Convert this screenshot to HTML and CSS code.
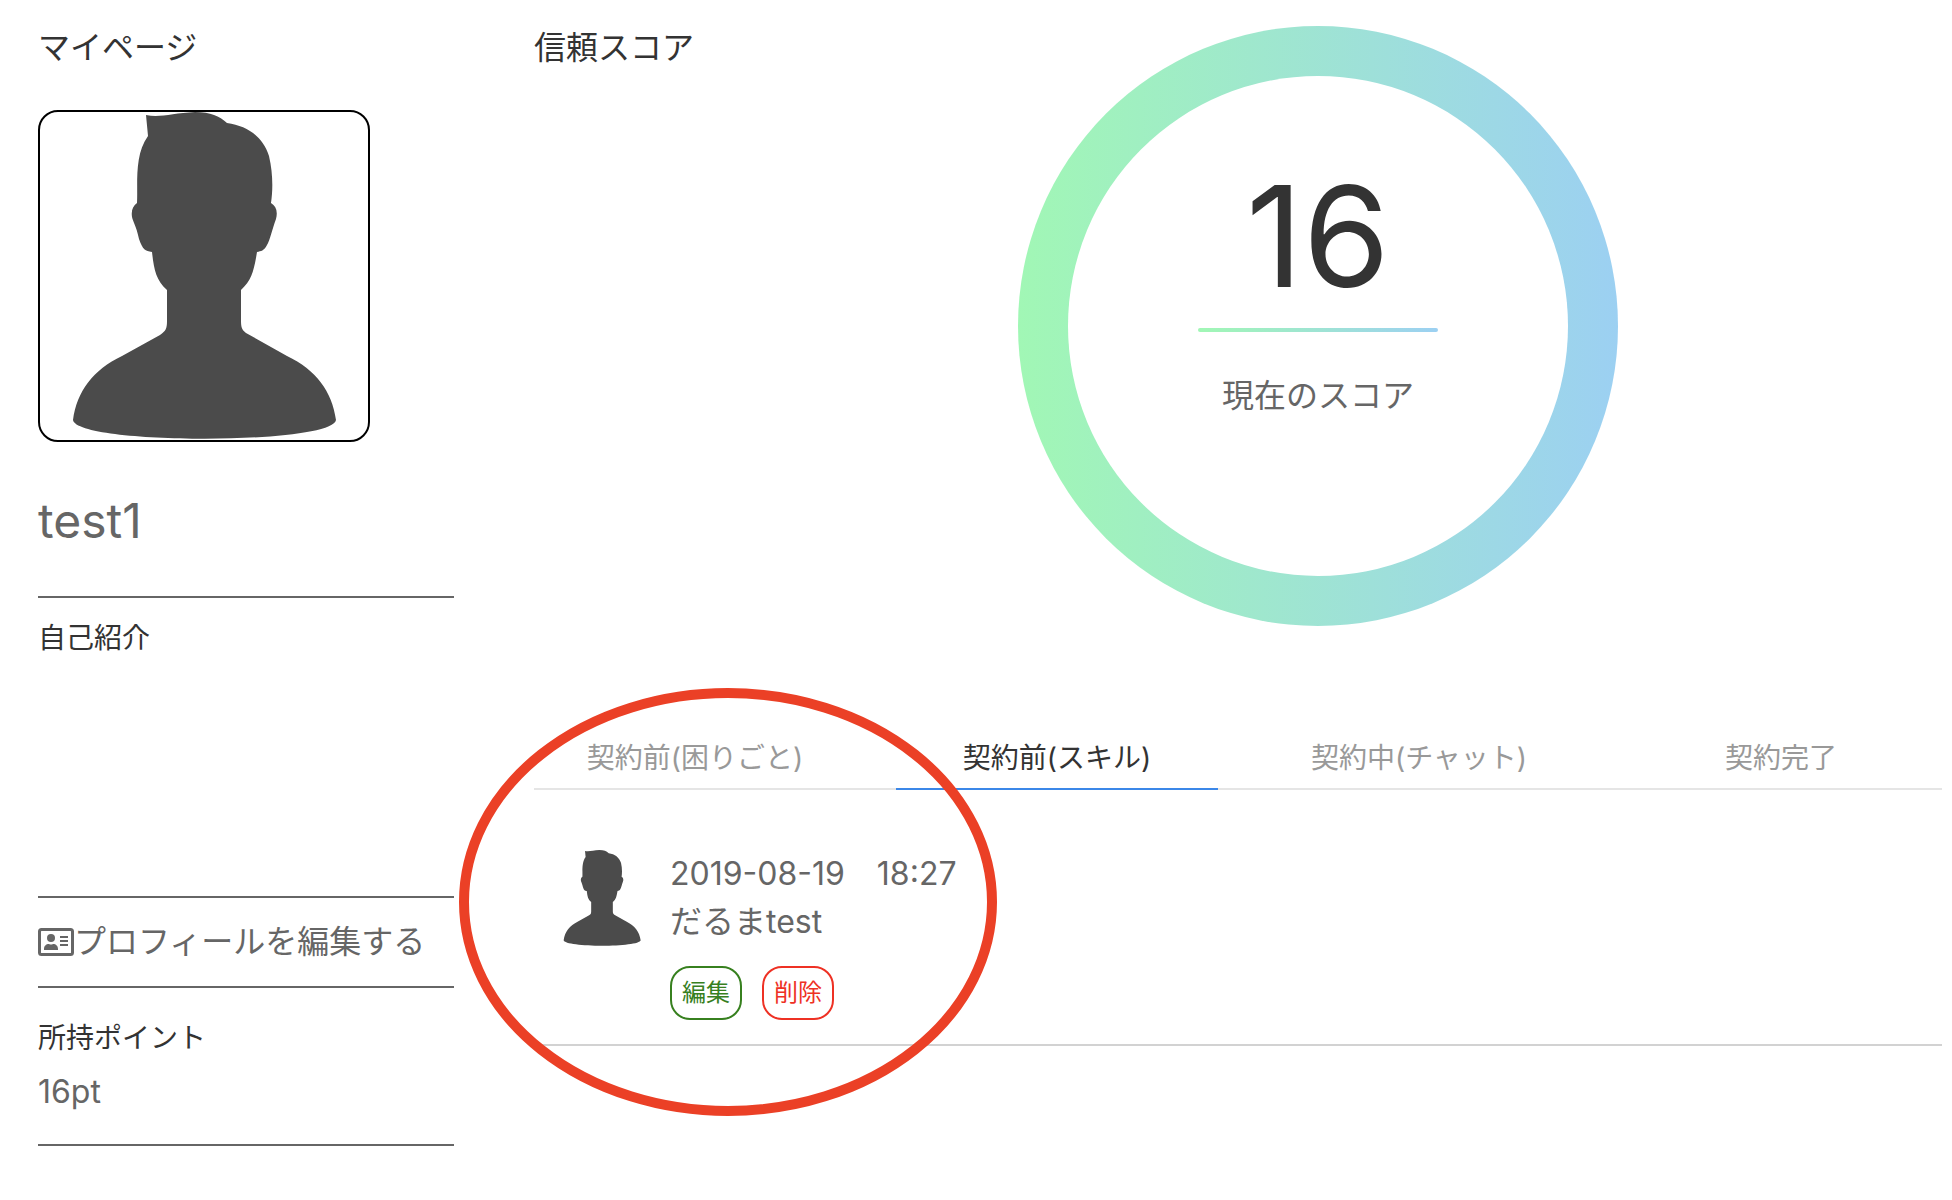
FILE: index.html
```html
<!DOCTYPE html>
<html lang="ja">
<head>
    <meta charset="UTF-8">
    <meta name="viewport" content="width=device-width, initial-scale=1.0">
    <title>マイページ</title>
    <link rel="stylesheet" href="styles.css">
</head>
<body>
    <!-- avatar silhouette, used twice below -->
    <svg class="symbols" aria-hidden="true">
        <symbol id="person" viewBox="0 0 328 328">
            <path d="M106 3 C120 6 133 1 155 0 C171 0 179 4 187 11 C208 14 223 25 229 44 C233 61 233 78 231 91 C236 94 238 99 236 107 C232 118 230 128 227 133 C224 139 221 139 217 140 C214 158 212 168 201 178 L201 209 C201 215 202 218 206 221 L247 244 C276 258 292 279 296 308 C292 333 37 333 33 308 C37 279 53 258 82 244 L120 223 C126 219 127 216 127 209 L127 178 C116 168 114 158 112 140 C105 139 103 138 99 127 C96 113 93 110 92 105 C91 98 93 94 97 91 C98 73 94 43 108 24 Z" fill="#4b4b4b"/>
        </symbol>
    </svg>
    <div class="container">
        <aside class="profile">
            <h1 class="title">マイページ</h1>
            <svg class="profile-img" role="img" aria-label="プロフィール画像"><use href="#person"/></svg>
            <p class="profile-name">test1</p>
            <section class="intro">
                <h2 class="label">自己紹介</h2>
            </section>
            <a href="#" class="edit-link">
                <svg class="card-icon" viewBox="0 0 36 28" aria-hidden="true">
                    <rect x="1.5" y="1.5" width="33" height="25" rx="2" fill="none" stroke="currentColor" stroke-width="3"/>
                    <circle cx="13" cy="10" r="4"/>
                    <path d="M6 22v-1c0-3 2-5 5-5q2 1 4 0c3 0 5 2 5 5v1zM22 8h8v2h-8zM22 12h8v2h-8zM22 16h8v2h-8z"/>
                </svg>
                <span>プロフィールを編集する</span>
            </a>
            <section class="point">
                <h2 class="label">所持ポイント</h2>
                <p class="point-value">16pt</p>
            </section>
        </aside>
        <main class="content">
            <section class="score">
                <h2 class="title">信頼スコア</h2>
                <div class="score-circle">
                    <div class="score-inner">
                        <p class="score-number">16</p>
                        <div class="score-line"></div>
                        <p class="score-text">現在のスコア</p>
                    </div>
                </div>
            </section>
            <nav class="tab">
                <div class="tab-item"><a href="#">契約前(困りごと)</a></div>
                <div class="tab-item active"><a href="#">契約前(スキル)</a></div>
                <div class="tab-item"><a href="#">契約中(チャット)</a></div>
                <div class="tab-item"><a href="#">契約完了</a></div>
            </nav>
            <article class="post">
                <svg class="post-img" role="img" aria-label="投稿者の画像"><use href="#person"/></svg>
                <div class="post-body">
                    <p>2019-08-19　18:27</p>
                    <p>だるまtest</p>
                    <div class="buttons">
                        <button type="button" class="btn edit">編集</button>
                        <button type="button" class="btn delete">削除</button>
                    </div>
                </div>
                <!-- red marker round the post -->
                <svg class="marker" viewBox="0 0 538 428" aria-hidden="true">
                    <ellipse cx="269" cy="214" rx="264" ry="209" fill="none" stroke="#eb4026" stroke-width="10"/>
                </svg>
            </article>
        </main>
    </div>
</body>
</html>
```

FILE: styles.css
```css
* {
    box-sizing: border-box;
}
body {
    font-family: Inter, "Noto Sans CJK JP", sans-serif;
    margin: 0;
    background: #fff;
    color: #666;
    font-size: 32px;
    line-height: 48px;
}
h1, h2, p {
    margin: 0;
    font-weight: normal;
}
a {
    color: inherit;
    text-decoration: none;
}
.symbols {
    display: none;
}
.container {
    display: flex;
    gap: 80px;
    padding: 24px 10px 0 38px;
}
.title {
    font-size: 32px;
    line-height: 48px;
    color: #333;
}
.label {
    font-size: 28px;
    line-height: 40px;
    color: #333;
}

/* left column */
.profile {
    flex: 0 0 416px;
}
.profile-img {
    display: block;
    width: 332px;
    height: 332px;
    margin-top: 38px;
    border: 2px solid #000;
    border-radius: 20px;
}
.profile-name {
    padding: 48px 0 44px;
    font-size: 48px;
    line-height: 62px;
    border-bottom: 2px solid #666;
}
.intro {
    min-height: 300px;
    padding-top: 20px;
    border-bottom: 2px solid #666;
}
.edit-link {
    display: flex;
    align-items: center;
    padding: 20px 0;
    border-bottom: 2px solid #666;
}
.card-icon {
    width: 36px;
    height: 28px;
    fill: currentColor;
}
.point {
    padding: 30px 0 28px;
    border-bottom: 2px solid #666;
}
.point-value {
    margin-top: 10px;
}

/* right column */
.content {
    flex: 1;
    min-width: 0;
}
.score {
    display: flex;
    align-items: flex-start;
}
.score-circle {
    flex: none;
    width: 600px;
    height: 600px;
    margin: 2px auto 0;
    padding: 50px;
    border-radius: 50%;
    background: linear-gradient(90deg, #a1f7b5, #9cd0f2);
}
.score-inner {
    display: flex;
    flex-direction: column;
    align-items: center;
    height: 100%;
    padding-top: 100px;
    border-radius: 50%;
    background: #fff;
}
.score-number {
    font-size: 140px;
    line-height: 120px;
    color: #333;
}
.score-line {
    width: 240px;
    height: 4px;
    margin: 32px 0 40px;
    border-radius: 2px;
    background: linear-gradient(90deg, #a1f7b5, #9cd0f2);
}
.tab {
    display: grid;
    grid-template-columns: repeat(4, 1fr);
    margin: 104px -20px 0;
    font-size: 28px;
    line-height: 40px;
    color: #999;
    text-align: center;
    background: linear-gradient(#e5e5e5, #e5e5e5) center bottom / calc(100% - 40px) 2px no-repeat;
}
.tab-item {
    padding: 0 20px;
}
.tab-item a {
    display: block;
    padding: 8px 0 10px;
    border-bottom: 2px solid transparent;
}
.tab-item.active a {
    color: #333;
    border-color: #3b87e8;
}
.post {
    position: relative;
    display: flex;
    gap: 20px;
    padding: 60px 20px 24px;
    border-bottom: 2px solid #d2d2d2;
}
.post-img {
    flex: none;
    width: 96px;
    height: 96px;
}
.buttons {
    display: flex;
    gap: 20px;
    margin-top: 20px;
}
.btn {
    padding: 0 10px;
    font: inherit;
    font-size: 24px;
    line-height: 50px;
    border: 2px solid;
    border-radius: 20px;
    background: none;
    cursor: pointer;
}
.edit {
    color: #37801f;
}
.delete {
    color: #ee3124;
}
.marker {
    position: absolute;
    top: -102px;
    left: -75px;
    width: 538px;
    height: 428px;
    pointer-events: none;
}
```
